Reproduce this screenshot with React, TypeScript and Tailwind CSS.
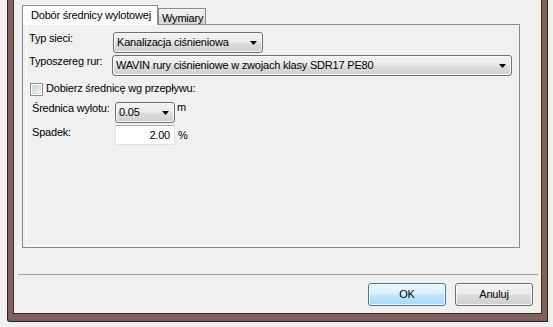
const Arrow = () => (
  <svg width="7" height="4" viewBox="0 0 7 4" className="mt-px shrink-0">
    <path d="M0 0h7L3.5 4z" fill="#000" />
  </svg>
);

const Combo: React.FC<{ text: string; className: string }> = ({ text, className }) => (
  <div
    className={`flex h-[21px] shrink-0 items-center justify-between rounded-[3px] border border-[#707070] bg-[linear-gradient(180deg,#f2f2f2_0%,#ebebeb_48%,#dddddd_52%,#cfcfcf_100%)] pl-[3px] pr-[5px] shadow-[inset_0_0_0_1px_#f8f8f8] ${className}`}
  >
    <span className="whitespace-nowrap">{text}</span>
    <Arrow />
  </div>
);

export default function App() {
  return (
    <div className="h-[327px] w-[553px] overflow-hidden bg-[#f0f0f0] font-['Liberation_Sans',Arial,sans-serif] text-[11px] leading-[13px] tracking-[-0.2px] text-black">
      {/* window frame */}
      <div className="ml-[7px] h-[322px] w-[541px] rounded-bl-[3px] border-x border-b border-[#2e2222] bg-[#80605c] px-[5px] pb-[7px]">
        <div className="flex h-full flex-col border-x border-b border-[#3a2c2b] bg-[#f0f0f0] pt-[5px]">
          {/* tabs */}
          <div className="relative z-10 mb-[-1px] ml-[8px] flex items-end">
            <div className="h-[20px] w-[136px] border border-b-0 border-[#898c95] bg-white pl-[8px] pt-[3px] whitespace-nowrap">
              Dobór średnicy wylotowej
            </div>
            <div className="mb-px h-[16px] w-[48px] border border-b-0 border-[#898c95] bg-[linear-gradient(180deg,#f2f2f2_0%,#ebebeb_50%,#dddddd_52%,#d6d6d6_100%)] pl-[3px] pt-[3px] whitespace-nowrap">
              Wymiary
            </div>
          </div>

          {/* panel */}
          <div className="ml-[8px] h-[224px] w-[498px] border border-[#898c95] bg-[#f0f0f0] pb-px">
            <div className="ml-[3px] flex h-full flex-col border-b border-l border-white">
              <div className="mt-[7px] flex items-start">
                <span className="ml-[2px] w-[84px]">Typ sieci:</span>
                <Combo text="Kanalizacja ciśnieniowa" className="w-[150px]" />
              </div>
              <div className="mt-[2px] flex items-start">
                <span className="ml-[2px] w-[83px]">Typoszereg rur:</span>
                <Combo text="WAVIN rury ciśnieniowe w zwojach klasy SDR17 PE80" className="w-[400px]" />
              </div>
              <div className="mt-[7px] ml-[3px] flex h-[13px] items-center gap-[3px]">
                <div className="h-[13px] w-[13px] border border-[#8e8f8f] bg-white p-[1px]">
                  <div className="h-full w-full border border-[#e0e0e0] bg-[linear-gradient(135deg,#c9ccd1_0%,#e4e5e7_60%,#f6f6f6_100%)]" />
                </div>
                <span className="-mt-[2px] whitespace-nowrap">Dobierz średnicę wg przepływu:</span>
              </div>
              <div className="mt-[6px] flex items-start">
                <span className="ml-[5px] w-[83px]">Średnica wylotu:</span>
                <Combo text="0.05" className="w-[60px]" />
                <span className="-mt-px ml-[2px]">m</span>
              </div>
              <div className="mt-[2px] flex items-center">
                <span className="ml-[5px] w-[83px] self-start pt-px">Spadek:</span>
                <div className="flex h-[20px] w-[60px] items-center justify-end border border-[#e2e3ea] border-t-[#abadb3] bg-white pr-[4px]">
                  2.00
                </div>
                <span className="ml-[3px]">%</span>
              </div>
            </div>
          </div>

          {/* separator */}
          <div className="ml-[4px] mt-[26px] h-px w-[520px] bg-[#a0a0a0]" />

          {/* buttons */}
          <div className="mt-[8px] flex justify-end gap-[9px] pr-[8px]">
            <button className="h-[23px] w-[78px] rounded-[3px] border border-[#3c7fb1] bg-[linear-gradient(180deg,#eaf6fd_0%,#d9f0fc_48%,#bee6fd_52%,#a7d9f5_100%)] shadow-[inset_0_0_0_1px_#f2fafe]">
              OK
            </button>
            <button className="h-[23px] w-[78px] rounded-[3px] border border-[#707070] bg-[linear-gradient(180deg,#f2f2f2_0%,#ebebeb_48%,#dddddd_52%,#cfcfcf_100%)] shadow-[inset_0_0_0_1px_#f8f8f8]">
              Anuluj
            </button>
          </div>
        </div>
      </div>
    </div>
  );
}
